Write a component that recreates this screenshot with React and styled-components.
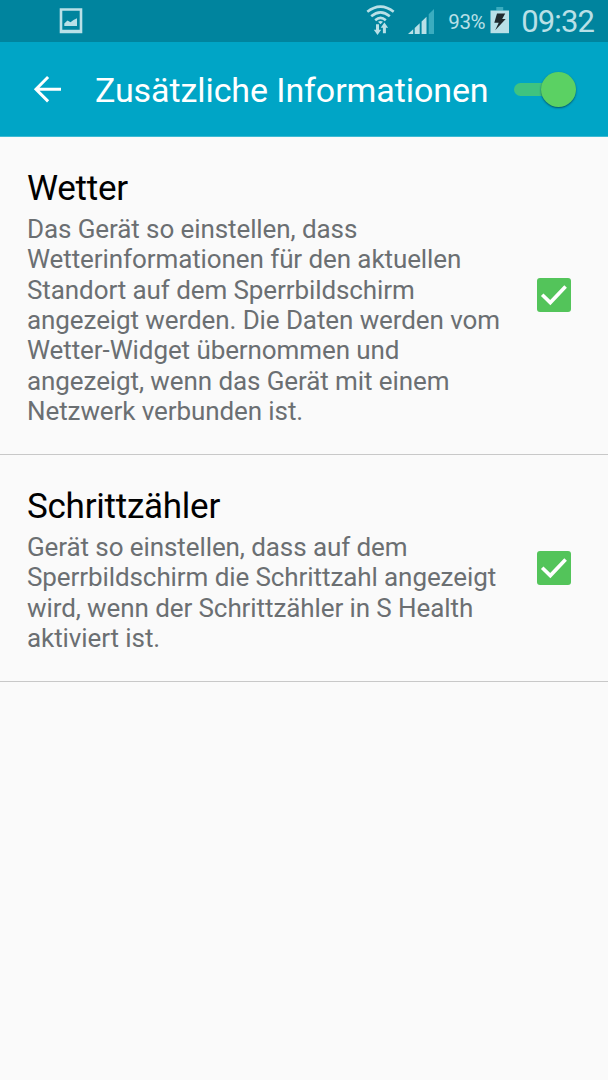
import React from "react";
import styled, { createGlobalStyle } from "styled-components";

const settings = [
  {
    id: "weather",
    title: "Wetter",
    text: [
      "Das Gerät so einstellen, dass",
      "Wetterinformationen für den aktuellen",
      "Standort auf dem Sperrbildschirm",
      "angezeigt werden. Die Daten werden vom",
      "Wetter-Widget übernommen und",
      "angezeigt, wenn das Gerät mit einem",
      "Netzwerk verbunden ist.",
    ],
  },
  {
    id: "steps",
    title: "Schrittzähler",
    text: [
      "Gerät so einstellen, dass auf dem",
      "Sperrbildschirm die Schrittzahl angezeigt",
      "wird, wenn der Schrittzähler in S Health",
      "aktiviert ist.",
    ],
  },
];

const PictureIcon = () => (
  <svg width="24" height="26" viewBox="0 0 24 26">
    <path fill="#b9e0e7" fillRule="evenodd" d="M0.7 0.2H23.3V25.2H0.7ZM3.3 2.8V21.8H20.7V2.8Z" />
    <path fill="#b9e0e7" d="M5.3 18V15.5L8.5 12.5L11.5 14.2L14.5 12L18 10.2V18Z" />
  </svg>
);

const WifiIcon = () => (
  <svg width="30" height="32" viewBox="0 0 30 32">
    <g fill="none" stroke="#b9e0e7" strokeWidth="2.6">
      <path d="M1.3 6.8Q14.5 -3.6 27.7 6.8" />
      <path d="M5.2 11.2Q14.5 3.4 23.8 11.2" />
      <path d="M9.2 15.2Q14.5 10.6 19.8 15.2" />
    </g>
    <path fill="#b9e0e7" d="M12 16.8Q14.5 15 17 16.8L14.5 19.2Z" />
    <path fill="#b9e0e7" d="M10 19.3H13V24.8H15.2L11.5 30L7.8 24.8H10Z" />
    <path fill="#b9e0e7" d="M16.9 28.2H19.9V22.8H22.1L18.4 17.6L14.7 22.8H16.9Z" />
  </svg>
);

const SignalIcon = () => (
  <svg width="28" height="28" viewBox="0 0 28 28">
    <path fill="#b9e0e7" d="M0 27L5.2 22.2V27ZM6.7 20.9L11.7 16.2V27H6.7ZM13.6 14.4L18.5 9.8V27H13.6Z" />
    <path fill="#3bacbf" d="M20.7 7.3L26 2V27H20.7Z" />
  </svg>
);

const BatteryIcon = () => (
  <svg width="20" height="28" viewBox="0 0 20 28">
    <path fill="#3bacbf" d="M6.3 0H13.2V3.5H6.3Z" />
    <path fill="#b9e0e7" d="M0.5 3.5H19V26.2H0.5Z" />
    <path fill="#202a2d" d="M7 6.5H15.2L12.2 12H15.7L5.2 23.3L8.7 15.7H4.3Z" />
  </svg>
);

const BackIcon = () => (
  <svg width="28" height="28" viewBox="0 0 28 28" fill="none" stroke="#fff" strokeWidth="3">
    <path d="M15.1 2L3 14.2L15.1 26.4M3.1 14.2H28" />
  </svg>
);

const CheckIcon = () => (
  <svg width="34" height="34" viewBox="0 0 34 34" fill="none" stroke="#fff" strokeWidth="3.6">
    <path d="M5.2 16.8L13.3 24.6L28.6 8.6" />
  </svg>
);

const App = () => {
  return (
    <Screen>
      <GlobalStyle />
      <StatusBar>
        <PictureIcon />
        <StatusIcons>
          <WifiIcon />
          <SignalIcon />
          <Percent>93%</Percent>
          <BatteryIcon />
          <Clock>09:32</Clock>
        </StatusIcons>
      </StatusBar>
      <Header>
        <BackIcon />
        <PageTitle>Zusätzliche Informationen</PageTitle>
        <Switch>
          <Thumb />
        </Switch>
      </Header>
      <List>
        {settings.map((item) => (
          <Row key={item.id}>
            <Info>
              <RowTitle>{item.title}</RowTitle>
              <RowText>{item.text.join("\n")}</RowText>
            </Info>
            <Checkbox>
              <CheckIcon />
            </Checkbox>
          </Row>
        ))}
      </List>
    </Screen>
  );
};

const GlobalStyle = createGlobalStyle`
  body {
    margin: 0;
    background: #fafafa;
  }
  * {
    box-sizing: border-box;
  }
  svg {
    display: block;
    flex-shrink: 0;
  }
`;

const Screen = styled.div`
  width: 608px;
  height: 1080px;
  overflow: hidden;
  background: #fafafa;
  font-family: Roboto, "Liberation Sans", sans-serif;
`;

const StatusBar = styled.div`
  display: flex;
  align-items: center;
  justify-content: space-between;
  height: 42px;
  padding: 0 14px 0 59px;
  background: #00849e;
  color: #b9e0e7;
`;

const StatusIcons = styled.div`
  display: flex;
  align-items: center;
  height: 42px;
  svg:nth-of-type(2) {
    margin: 0 12px 0 12px;
  }
`;

const Percent = styled.span`
  width: 42px;
  font-size: 20.5px;
  letter-spacing: -0.4px;
  line-height: 42px;
  padding-top: 2px;
  white-space: nowrap;
`;

const Clock = styled.span`
  margin-left: 11px;
  font-size: 31px;
  letter-spacing: -0.9px;
  line-height: 42px;
  padding-top: 1px;
`;

const Header = styled.header`
  display: flex;
  align-items: center;
  height: 95px;
  padding: 0 32px 0 33px;
  background: #00a5c6;
  border-bottom: 1px solid #3dbad3;
`;

const PageTitle = styled.h1`
  flex: 1;
  margin: 2px 0 0 34px;
  color: #fff;
  font-size: 34px;
  font-weight: 400;
  letter-spacing: -0.09px;
  line-height: 42px;
  white-space: nowrap;
`;

const Switch = styled.div`
  display: flex;
  align-items: center;
  justify-content: flex-end;
  width: 62px;
  height: 13px;
  border-radius: 7px;
  background: #3fc380;
`;

const Thumb = styled.div`
  width: 35px;
  height: 35px;
  flex-shrink: 0;
  border-radius: 50%;
  background: #5bd163;
  box-shadow: 0 1px 2px rgba(0, 60, 75, 0.75);
`;

const List = styled.div`
  display: flex;
  flex-direction: column;
`;

const Row = styled.div`
  display: flex;
  align-items: center;
  justify-content: space-between;
  padding: 29.3px 37px 29.4px 27px;
  border-bottom: 1px solid #c8c8c8;
`;

const Info = styled.div`
  white-space: nowrap;
`;

const RowTitle = styled.h2`
  margin: 0;
  color: #000;
  font-size: 35px;
  font-weight: 400;
  letter-spacing: -0.25px;
  line-height: 46px;
`;

const RowText = styled.p`
  margin: 0;
  padding-top: 1.6px;
  margin-bottom: -1.6px;
  color: #6b6f72;
  font-size: 26px;
  letter-spacing: -0.09px;
  line-height: 30.33px;
  white-space: pre;
`;

const Checkbox = styled.div`
  width: 34px;
  height: 34px;
  border-radius: 3px;
  background: #53c45a;
`;

export default App;
